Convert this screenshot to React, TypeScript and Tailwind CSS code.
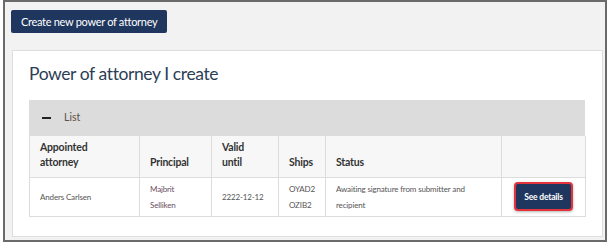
const font = { fontFamily: "Lato, 'Open Sans', sans-serif" };

const columns = [
  { label: ['Appointed', 'attorney'], width: 'w-[110px]' },
  { label: ['Principal'], width: 'w-[72px]' },
  { label: ['Valid', 'until'], width: 'w-[67px]' },
  { label: ['Ships'], width: 'w-[47px]' },
  { label: ['Status'], width: 'w-[176px]' },
  { label: [], width: 'w-[84px]' },
];

export default function App() {
  return (
    <div className="w-[614px] h-[248px] bg-white" style={font}>
      <div className="ml-[3px] w-[604px] h-[242px] border-2 border-[#6a6a6a] bg-[#f2f2f2] pt-[6px] pl-[6px]">
        {/* Top action */}
        <button className="h-[23px] rounded-[2px] bg-[#1f375e] px-[10px] text-[11px] tracking-[-0.3px] text-white leading-none">
          Create new power of attorney
        </button>

        {/* Card */}
        <div className="mt-[17px] ml-px w-[591px] border border-[#dedede] bg-white pl-[16px] pr-[17px] pt-[12px] pb-[19px]">
          <h1 className="text-[17.5px] leading-[22px] tracking-[-0.4px] text-[#2c3e55]">Power of attorney I create</h1>

          <div className="mt-[15px]">
            {/* Accordion header */}
            <div className="flex h-[36px] items-center bg-[#dcdcdc] pl-[13px]">
              <span className="h-[2px] w-[9px] bg-[#222]" />
              <span className="ml-[13px] text-[10.5px] text-[#5b5346]">List</span>
            </div>

            <table className="w-[556px] table-fixed border-collapse text-[#333]">
              <thead>
                <tr className="h-[41px] bg-[#f7f7f7]">
                  {columns.map((c, i) => (
                    <th
                      key={i}
                      className={`${c.width} border border-t-0 border-[#dcdcdc] px-[10px] pb-[7px] align-bottom text-left text-[10.5px] tracking-[-0.2px] font-bold leading-[15px]`}
                    >
                      {c.label.map((l) => (
                        <div key={l}>{l}</div>
                      ))}
                    </th>
                  ))}
                </tr>
              </thead>
              <tbody>
                <tr className="h-[39px] text-[8px] tracking-[-0.15px] leading-[16px] text-[#555]">
                  <td className="border border-[#dcdcdc] px-[10px]">Anders Carlsen</td>
                  <td className="border border-[#dcdcdc] px-[10px] text-[#6a4f62]">
                    <div>Majbrit</div>
                    <div>Selliken</div>
                  </td>
                  <td className="border border-[#dcdcdc] px-[10px]">2222-12-12</td>
                  <td className="border border-[#dcdcdc] px-[10px]">
                    <div>OYAD2</div>
                    <div>OZIB2</div>
                  </td>
                  <td className="border border-[#dcdcdc] px-[10px]">
                    <div>Awaiting signature from submitter and</div>
                    <div>recipient</div>
                  </td>
                  <td className="border border-[#dcdcdc] px-0">
                    <div className="flex justify-center">
                      <button className="h-[29px] w-[59px] rounded-[4px] border-2 border-[#e3343c] bg-[#1f375e] text-[8.5px] tracking-[-0.2px] font-bold text-white shadow-[0_1px_3px_rgba(0,0,0,0.3)]">
                        See details
                      </button>
                    </div>
                  </td>
                </tr>
              </tbody>
            </table>
          </div>
        </div>
      </div>
    </div>
  );
}
